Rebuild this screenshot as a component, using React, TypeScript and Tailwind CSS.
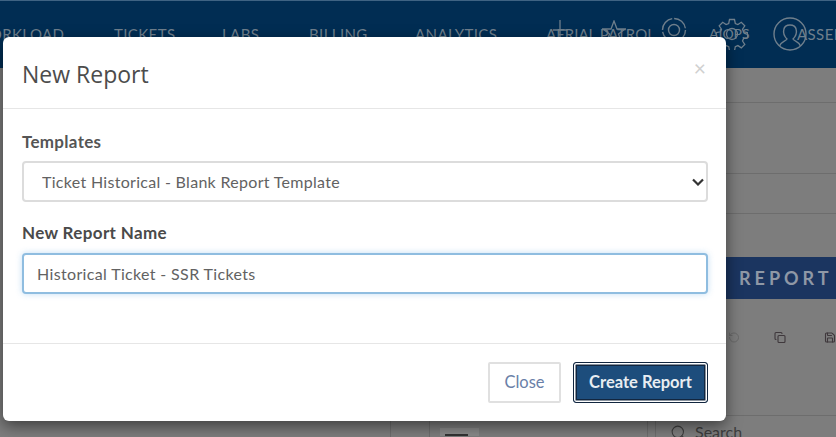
import { Search, RotateCw, Copy, Save } from "lucide-react";

const navItems = [
  { label: "WORKLOAD", width: "w-[140px]" },
  { label: "TICKETS", width: "w-[108px]" },
  { label: "LABS", width: "w-[87px]" },
  { label: "BILLING", width: "w-[106px]" },
  { label: "ANALYTICS", width: "w-[131px]" },
];

function TargetIcon() {
  return (
    <svg width="26" height="26" viewBox="0 0 26 26" fill="none" stroke="currentColor" strokeWidth="1.4">
      <circle cx="13" cy="13" r="11.5" strokeDasharray="16 2" />
      <circle cx="13" cy="13" r="5.5" />
    </svg>
  );
}

function GearIcon() {
  return (
    <svg width="32" height="32" viewBox="0 0 32 32" fill="none" stroke="currentColor" strokeWidth="1.3">
      <path d="M13.5 1.5h5l.8 4 2.6 1.1 3.4-2.3 3.5 3.5-2.3 3.4 1.1 2.6 4 .8v5l-4 .8-1.1 2.6 2.3 3.4-3.5 3.5-3.4-2.3-2.6 1.1-.8 4h-5l-.8-4-2.6-1.1-3.4 2.3-3.5-3.5 2.3-3.4-1.1-2.6-4-.8v-5l4-.8 1.1-2.6-2.3-3.4 3.5-3.5 3.4 2.3 2.6-1.1z" />
      <circle cx="16" cy="16" r="5.5" />
    </svg>
  );
}

function UserIcon() {
  return (
    <svg width="34" height="34" viewBox="0 0 34 34" fill="none" stroke="currentColor" strokeWidth="1.4">
      <circle cx="17" cy="17" r="16" />
      <path d="M6.5 29c1-4 6-4.500 7.500-7-3-3-4-6-3.200-9.500C11.500 9 14.500 8 17 8s5.500 1 6.200 4.500c.8 3.500-.2 6.500-3.200 9.500 1.500 2.500 6.500 3 7.500 7" />
    </svg>
  );
}

function PageBehind() {
  return (
    <div className="h-[437px] w-[836px] overflow-hidden bg-[#7d7d7d]">
      {/* Top nav */}
      <div className="flex h-[68px] items-start overflow-hidden border-t border-[#3f6383] bg-[#012d53] text-[15px] leading-5 text-[#6f7f8c] [font-family:Lato,sans-serif]">
        <div className="-ml-[26px] flex h-full items-start pt-[23px]">
          {navItems.map((item) => (
            <span key={item.label} className={`${item.width} shrink-0 tracking-[0.4px]`}>
              {item.label}
            </span>
          ))}
        </div>
        <span className="relative mt-[23px] w-[115px] shrink-0">
          AERIAL PATROL
          <svg className="absolute -top-[4px] left-[6px]" width="16" height="22" viewBox="0 0 16 22" fill="none" stroke="currentColor" strokeWidth="1.3">
            <path d="M8 0v22M1 10h14" />
          </svg>
          <svg className="absolute -top-[4px] left-[56px]" width="24" height="22" viewBox="0 0 24 22" fill="none" stroke="currentColor" strokeWidth="1.3">
            <path d="M12 1l3 8h8l-6.500 5 2.500 7-7-4.500L5 21l2.500-7L1 9h8z" />
          </svg>
        </span>
        <div className="mt-[16px] shrink-0">
          <TargetIcon />
        </div>
        <div className="relative mt-[17px] ml-[29px] shrink-0">
          <GearIcon />
          <span className="absolute top-[6px] -left-[7px] text-[14px]">AIOPS</span>
        </div>
        <div className="mt-[16px] ml-[25px] shrink-0">
          <UserIcon />
        </div>
        <span className="mt-[23px] -ml-[10px] shrink-0 tracking-[0.4px]">ASSERT</span>
      </div>

      {/* Page right of the dialog */}
      <div className="flex justify-end">
        <div className="w-[110px]">
          <div className="h-[35px] border-b border-[#6d6d6d]" />
          <div className="h-[71px] border-b border-[#6d6d6d]" />
          <div className="h-[40px] border-b border-[#6d6d6d]" />
          <div className="mt-[43px] flex h-[42px] items-center bg-[#1b3560] pl-[13px] text-[18px] font-bold tracking-[4px] text-[#8f98a6] [font-family:Lato,sans-serif]">
            REPORT
          </div>
          <div className="flex items-center pt-[31px] pl-[2px] text-[#3f383c]">
            <RotateCw size={15} strokeWidth={1.8} className="scale-x-[-1] text-[#666]" />
            <Copy size={15} strokeWidth={2.2} className="ml-[34px]" />
            <Save size={15} strokeWidth={2.2} className="ml-[38px]" />
          </div>
          <div className="mt-[70px] h-px bg-[#6d6d6d]" />
        </div>
      </div>

      {/* Strip below the dialog */}
      <div className="flex h-[30px]">
        <div className="ml-[390px] w-[40px] border-x border-[#6d6d6d]" />
        <div className="w-[218px] border-r border-[#6d6d6d] pl-[10px] pt-[12px]">
          <div className="flex h-[8px] w-[39px] items-end bg-[#8a8a8a] px-[5px]">
            <div className="h-[2px] w-[23px] bg-[#333]" />
          </div>
        </div>
        <div className="ml-[7px] flex items-center gap-[8px] border-l border-[#6d6d6d] pt-[2px] pl-[14px] text-[16px] text-[#3d3d3d] [font-family:Lato,sans-serif]">
          <Search size={17} strokeWidth={1.5} />
          Search
        </div>
      </div>
    </div>
  );
}

function NewReportDialog() {
  return (
    <div className="absolute top-[37px] left-[3px] flex h-[384px] w-[723px] flex-col rounded-[6px] bg-white shadow-[0_5px_15px_rgba(0,0,0,0.5)] [font-family:Lato,sans-serif]">
      <div className="flex h-[72px] items-start justify-between border-b border-[#e6e6e6] pl-[19px] pr-[20px]">
        <h4 className="mt-[22px] text-[23px] leading-[30px] text-[#4c4c4c] [font-family:'Open_Sans',sans-serif]">New Report</h4>
        <span className="mt-[21px] text-[21px] leading-[20px] text-[#d0d0d0]">×</span>
      </div>

      <div className="flex-1 pt-[23px] pr-[18px] pl-[19px]">
        <label className="block text-[17px] leading-[20px] font-bold tracking-[0.3px] text-[#555]">Templates</label>
        <div className="relative mt-[9px]">
          <select className="h-[41px] w-full appearance-none rounded-[4px] border-2 border-[#dcdcdc] bg-white pl-[18px] text-[16px] tracking-[0.3px] text-[#626262] outline-none">
            <option>Ticket Historical - Blank Report Template</option>
          </select>
          <svg className="pointer-events-none absolute top-[17px] right-[4px]" width="12" height="8" viewBox="0 0 12 8" fill="none" stroke="#333" strokeWidth="2.2">
            <path d="M1 1.500l5 5 5-5" />
          </svg>
        </div>
        <label className="mt-[21px] block text-[17px] leading-[20px] font-bold tracking-[0.35px] text-[#4a4a4a]">New Report Name</label>
        <input
          readOnly
          value="Historical Ticket - SSR Tickets"
          className="mt-[10px] h-[41px] w-full rounded-[4px] border-2 border-[#8fbde0] bg-white pl-[13px] text-[16px] tracking-[0.35px] text-[#626262] shadow-[0_0_6px_rgba(120,180,230,0.45)] outline-none"
        />
      </div>

      <div className="flex h-[78px] items-start justify-end gap-[12px] border-t border-[#e6e6e6] pt-[18px] pr-[18px]">
        <button className="h-[41px] w-[73px] rounded-[2px] border-2 border-[#e0e0e0] bg-white text-[16.5px] text-[#6a7fa8]">Close</button>
        <button className="h-[41px] w-[135px] rounded-[3px] border border-[#12263f] bg-[#1d4d7c] text-[16.5px] font-bold text-[#e8edf2] shadow-[inset_0_0_0_1.5px_#ffffff,inset_0_0_0_3px_#12263f]">
          Create Report
        </button>
      </div>
    </div>
  );
}

export default function App() {
  return (
    <div className="relative h-[437px] w-[836px] overflow-hidden">
      <PageBehind />
      <NewReportDialog />
    </div>
  );
}
